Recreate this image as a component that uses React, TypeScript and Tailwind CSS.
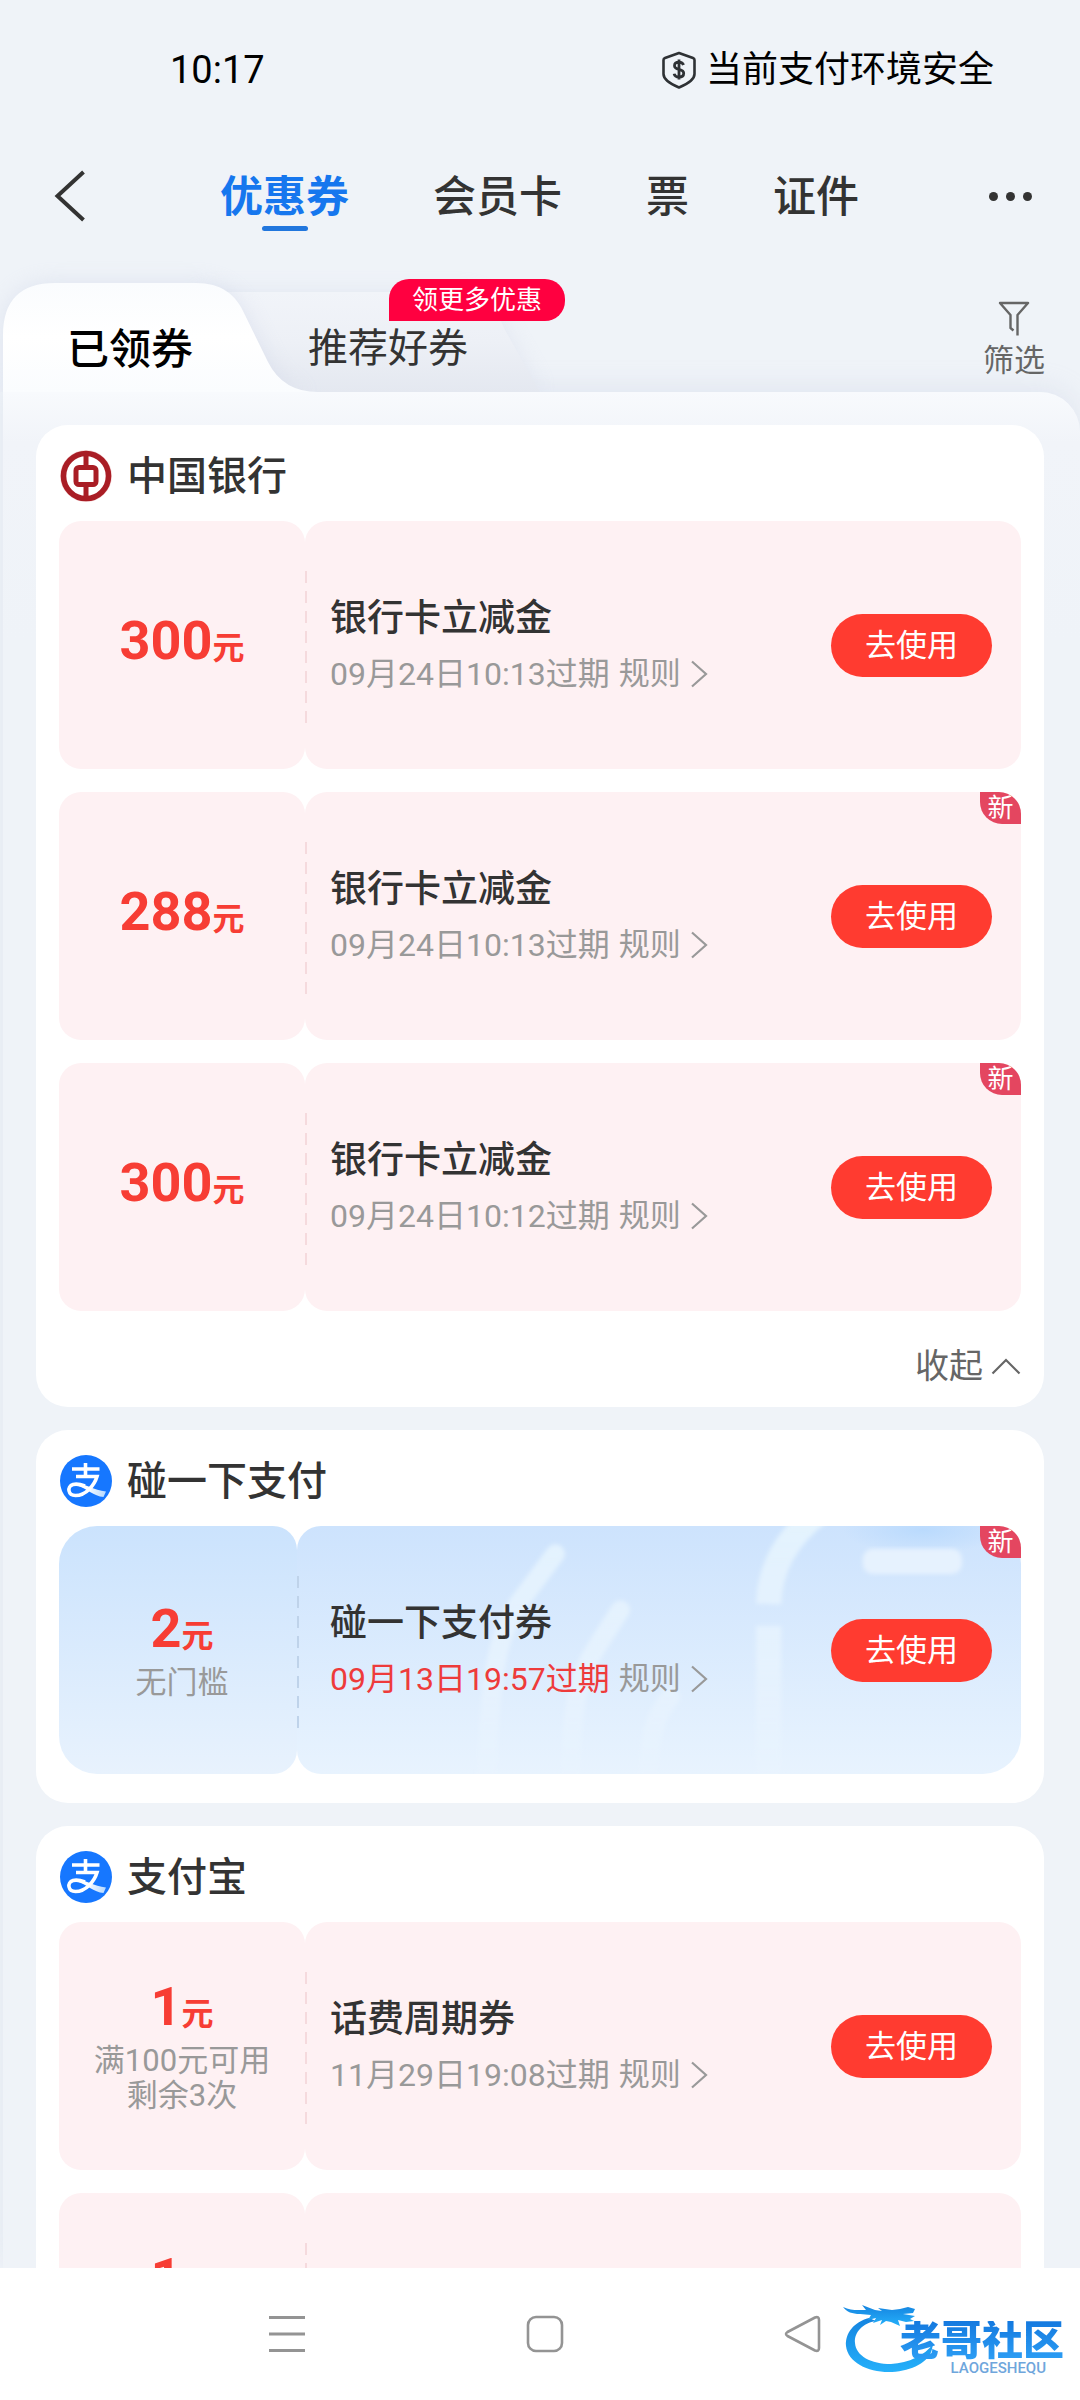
import { useState } from "react";
import type { ReactNode } from "react";
import clsx from "clsx";

interface Coupon {
  id: number;
  amount: string;
  notes?: string[];
  title: string;
  expiry: string;
  urgent?: boolean;
  isNew?: boolean;
}

interface CouponGroup {
  name: string;
  logo: ReactNode;
  theme: "pink" | "blue";
  collapsible?: boolean;
  coupons: Coupon[];
}

function BankLogo() {
  return (
    <svg viewBox="0 0 52 52" className="size-[52px] shrink-0" fill="none" stroke="#a91d25" aria-hidden="true">
      <circle cx="26" cy="26" r="25.5" stroke="#f7d9da" strokeWidth="1" />
      <circle cx="26" cy="26" r="22.5" strokeWidth="5.600" />
      <rect x="16" y="17.5" width="20" height="17" rx="3" strokeWidth="5" />
      <path d="M26 4v13M26 35v13" strokeWidth="5" />
    </svg>
  );
}

function AlipayLogo() {
  return (
    <svg viewBox="0 0 52 52" className="size-[52px] shrink-0" fill="none" aria-hidden="true">
      <defs>
        <linearGradient id="swoosh" x1="26" y1="34" x2="46" y2="40" gradientUnits="userSpaceOnUse">
          <stop offset="0" stopColor="#fff" />
          <stop offset="1" stopColor="#b4d8ff" />
        </linearGradient>
      </defs>
      <circle cx="26" cy="26" r="26" fill="#1677ff" />
      <path d="M17 28C25 29 34 35 46 36.500L43.500 42C34 41.500 26 33 17 30.500Z" fill="url(#swoosh)" />
      <path
        d="M12 14H39.500M25.500 8V21.500M16 21.500H37C34.500 30 26 40.500 15.500 40.500C8 40.500 6.500 31.500 13 29.500C17 28.500 21 29.500 25 31"
        stroke="#fff"
        strokeWidth="3.600"
      />
    </svg>
  );
}

const groups: CouponGroup[] = [
  {
    name: "中国银行",
    logo: <BankLogo />,
    theme: "pink",
    collapsible: true,
    coupons: [
      { id: 1, amount: "300", title: "银行卡立减金", expiry: "09月24日10:13过期" },
      { id: 2, amount: "288", title: "银行卡立减金", expiry: "09月24日10:13过期", isNew: true },
      { id: 3, amount: "300", title: "银行卡立减金", expiry: "09月24日10:12过期", isNew: true },
    ],
  },
  {
    name: "碰一下支付",
    logo: <AlipayLogo />,
    theme: "blue",
    coupons: [
      { id: 4, amount: "2", notes: ["无门槛"], title: "碰一下支付券", expiry: "09月13日19:57过期", urgent: true, isNew: true },
    ],
  },
  {
    name: "支付宝",
    logo: <AlipayLogo />,
    theme: "pink",
    coupons: [
      { id: 5, amount: "1", notes: ["满100元可用", "剩余3次"], title: "话费周期券", expiry: "11月29日19:08过期" },
      { id: 6, amount: "1", notes: ["满100元可用", "剩余3次"], title: "话费周期券", expiry: "11月29日19:08过期" },
    ],
  },
];

const mainTabs = ["优惠券", "会员卡", "票", "证件"];

function StatusBar() {
  return (
    <div className="flex h-[138px] shrink-0 items-center justify-between pt-[2px] pr-[86px] pl-[170px] text-[36px] text-black">
      <span className="text-[38px]">10:17</span>
      <div className="flex items-center gap-[10px]">
        <svg viewBox="0 0 34 38" className="h-[38px] w-[34px]" fill="none" stroke="#2e3135" strokeWidth="2.600" strokeLinejoin="round" aria-hidden="true">
          <path d="M17 2L31 7c1 .4 1.500 1 1.500 2v14c0 6-7 10-15.500 13.500C8.500 33 1.500 29 1.500 23V9c0-1 .5-1.600 1.500-2z" />
          <path d="M21.500 14c-.6-2-2.200-2.900-4.500-2.900-2.600 0-4.500 1.300-4.500 3.600 0 5 9.200 2.500 9.200 7.600 0 2.400-2 3.800-4.700 3.800-2.600 0-4.400-1.200-4.900-3.400M17 8.500v20" strokeWidth="2.800" />
        </svg>
        <span>当前支付环境安全</span>
      </div>
    </div>
  );
}

function TopNav() {
  const [active, setActive] = useState("优惠券");

  return (
    <nav className="flex h-[116px] shrink-0 items-center justify-between pr-[48px] pl-[54px]">
      <button type="button" aria-label="返回">
        <svg viewBox="0 0 32 52" className="h-[52px] w-[32px]" fill="none" stroke="#333" strokeWidth="4" aria-hidden="true">
          <path d="M29.500 2L3.500 26L29.500 50" />
        </svg>
      </button>
      <div className="flex gap-[84px] pt-[2px] pl-[4px] text-[43px] font-medium">
        {mainTabs.map((tab) => (
          <button
            key={tab}
            type="button"
            onClick={() => setActive(tab)}
            className={clsx("relative leading-[60px]", tab === active ? "font-bold text-[#1677ee]" : "text-[#333]")}
          >
            {tab}
            {tab === active && (
              <span className="absolute -bottom-[4px] left-1/2 h-[5px] w-[46px] -translate-x-1/2 rounded-full bg-[#2176dd]" />
            )}
          </button>
        ))}
      </div>
      <button type="button" aria-label="更多" className="flex gap-[8px]">
        <span className="size-[9px] rounded-full bg-[#333]" />
        <span className="size-[9px] rounded-full bg-[#333]" />
        <span className="size-[9px] rounded-full bg-[#333]" />
      </button>
    </nav>
  );
}

function SubTabs() {
  return (
    <div className="relative flex h-[138px] shrink-0 items-end justify-between pr-[35px] pl-[67px]">
      {/* folder shaped tab backgrounds */}
      <svg viewBox="0 0 620 138" className="absolute bottom-0 left-0 h-[138px] w-[620px]" aria-hidden="true">
        <defs>
          <linearGradient id="tabFront" x1="0" y1="0" x2="0" y2="1">
            <stop offset="0" stopColor="#fafcfe" />
            <stop offset="0.5" stopColor="#ffffff" />
            <stop offset="1" stopColor="#fafcfe" />
          </linearGradient>
          <linearGradient id="tabBack" x1="0" y1="0" x2="0" y2="1">
            <stop offset="0" stopColor="#f1f4f9" />
            <stop offset="0.5" stopColor="#edf0f6" />
            <stop offset="1" stopColor="#e4e8f0" />
          </linearGradient>
          <filter id="tabShadow" x="-20%" y="-40%" width="140%" height="180%">
            <feGaussianBlur stdDeviation="11" />
          </filter>
        </defs>
        <path d="M200 38H465C487 38 495 52 505 76L540 138H200Z" fill="#c9cfe3" opacity="0.35" filter="url(#tabShadow)" />
        <path d="M200 38H465C487 38 495 52 505 76L540 138H200Z" fill="url(#tabBack)" />
        <path d="M3 138V81Q3 29 55 29H196C221 29 236 40 245 61L268 108Q283 138 318 138Z" fill="#c5cce2" opacity="0.4" filter="url(#tabShadow)" />
        <path d="M3 138V81Q3 29 55 29H196C221 29 236 40 245 61L268 108Q283 138 318 138Z" fill="url(#tabFront)" />
      </svg>
      <div className="relative flex gap-[115px]">
        <button type="button" className="h-[86px] text-[42px] font-medium text-black">
          已领券
        </button>
        <button type="button" className="relative h-[86px] text-[40px] text-[#333]">
          推荐好券
          <span className="absolute -top-[27px] left-[81px] rounded-[20px] rounded-bl-none bg-[#ff0040] px-[23px] text-[26px] leading-[42px] whitespace-nowrap text-white">
            领更多优惠
          </span>
        </button>
      </div>
      <button type="button" className="relative mb-[15px] flex flex-col items-center gap-[9px] text-[31px] leading-[32px] text-[#666]">
        <svg viewBox="0 0 32 35" className="h-[35px] w-[32px]" fill="none" stroke="#666" strokeWidth="2.400" strokeLinejoin="round" aria-hidden="true">
          <path d="M19.500 34.500V14L30 2H2L12.500 14V27L15.500 29.500" />
        </svg>
        筛选
      </button>
    </div>
  );
}

function BlueArt() {
  return (
    <svg
      viewBox="0 0 723 248"
      preserveAspectRatio="xMaxYMid slice"
      className="absolute inset-0 h-full w-full"
      fill="none"
      strokeLinecap="round"
      aria-hidden="true"
    >
      <defs>
        <linearGradient id="fade" x1="0" y1="0" x2="0" y2="248" gradientUnits="userSpaceOnUse">
          <stop offset="0" stopColor="#e8f6fe" stopOpacity="0.85" />
          <stop offset="0.55" stopColor="#ecf6fe" stopOpacity="0.6" />
          <stop offset="1" stopColor="#f0f8fe" stopOpacity="0.1" />
        </linearGradient>
        <radialGradient id="spot">
          <stop offset="0" stopColor="#b5d8fd" stopOpacity="0.8" />
          <stop offset="1" stopColor="#b5d8fd" stopOpacity="0" />
        </radialGradient>
        <filter id="soft" x="-10%" y="-10%" width="120%" height="120%">
          <feGaussianBlur stdDeviation="2" />
        </filter>
      </defs>
      <ellipse cx="625" cy="4" rx="80" ry="24" fill="url(#spot)" />
      <g stroke="url(#fade)" filter="url(#soft)">
        <path d="M258 28L229 67C205 96 192 132 190 250" strokeWidth="19" />
        <path d="M323 84L300 120C281 148 274 180 273 250" strokeWidth="19" />
        <path d="M373 171C356 191 352 212 351 250" strokeWidth="19" />
        <path d="M522 -14C488 12 472 42 471 78" strokeWidth="25" strokeLinecap="butt" />
        <path d="M471 100V250" strokeWidth="25" strokeLinecap="butt" />
      </g>
      <rect x="565" y="23" width="99" height="25" rx="10" fill="#e6f2fe" filter="url(#soft)" />
    </svg>
  );
}

function CouponRow({ coupon, theme }: { coupon: Coupon; theme: "pink" | "blue" }) {
  const blue = theme === "blue";

  return (
    <li className="relative flex h-[248px]">
      <div
        className={clsx(
          "flex shrink-0 flex-col items-center justify-center",
          blue
            ? "w-[238px] rounded-[24px] rounded-l-[38px] bg-linear-to-b from-[#cbe3fd] to-[#e8f2fd] pl-[8px]"
            : "w-[246px] rounded-[22px] bg-[#fef1f3]"
        )}
      >
        <p className="flex h-[64px] items-baseline leading-[56px] font-bold text-[#f73d34]">
          <span className="text-[54px]">{coupon.amount}</span>
          <span className="text-[32px]">元</span>
        </p>
        {coupon.notes?.map((note) => (
          <p key={note} className="text-[31px] leading-[35px] text-[#999]">
            {note}
          </p>
        ))}
      </div>

      <div
        className={clsx(
          "relative flex flex-1 items-center justify-between overflow-hidden pr-[29px]",
          blue
            ? "rounded-[24px] rounded-r-[38px] bg-linear-to-b from-[#cde3fd] to-[#e8f3fe] pl-[33px]"
            : "rounded-[22px] bg-[#fef1f3] pl-[25px]"
        )}
      >
        {blue && <BlueArt />}
        <span
          className={clsx(
            "absolute top-[50px] left-0 h-[154px] w-[2px]",
            blue
              ? "bg-[repeating-linear-gradient(to_bottom,#bfd3ea_0px,#bfd3ea_12px,transparent_12px,transparent_20px)]"
              : "bg-[repeating-linear-gradient(to_bottom,#f5dadd_0px,#f5dadd_12px,transparent_12px,transparent_20px)]"
          )}
        />
        <div className="relative pt-[4px]">
          <h3 className="text-[37px] leading-[54px] font-medium text-[#333]">{coupon.title}</h3>
          <div className="flex items-center text-[31px] leading-[56px] text-[#999]">
            <span className={clsx("text-[32px]", coupon.urgent && "text-[#ee3b3b]")}>{coupon.expiry}</span>
            <a href="#rules" className="ml-[9px] flex items-center gap-[9px]">
              规则
              <svg viewBox="0 0 18 28" className="h-[28px] w-[18px]" fill="none" stroke="#999" strokeWidth="2.200" aria-hidden="true">
                <path d="M2 1.500L16 14L2 26.500" />
              </svg>
            </a>
          </div>
        </div>
        <button
          type="button"
          className="relative h-[63px] shrink-0 rounded-full bg-[#ff3b30] px-[34px] pt-[2px] text-[31px] whitespace-nowrap text-white"
        >
          去使用
        </button>
      </div>

      {coupon.isNew && (
        <span className="absolute top-0 right-0 h-[32px] w-[41px] rounded-tr-[22px] rounded-bl-[22px] bg-[#e44660] text-center text-[26px] leading-[32px] text-white">
          新
        </span>
      )}
    </li>
  );
}

function GroupCard({ group }: { group: CouponGroup }) {
  const [open, setOpen] = useState(true);
  const visible = open ? group.coupons : group.coupons.slice(0, 1);

  return (
    <section className={clsx("rounded-[32px] bg-white px-[23px]", !group.collapsible && "pb-[29px]")}>
      <header className="flex h-[96px] items-center gap-[15px] pt-[6px] pl-[1px]">
        {group.logo}
        <h2 className="pt-[2px] text-[40px] font-medium text-[#333]">{group.name}</h2>
      </header>
      <ul className="flex flex-col gap-[23px]">
        {visible.map((coupon) => (
          <CouponRow key={coupon.id} coupon={coupon} theme={group.theme} />
        ))}
      </ul>
      {group.collapsible && (
        <div className="flex h-[96px] items-center justify-end pt-[14px]">
          <button type="button" onClick={() => setOpen(!open)} className="flex items-center gap-[8px] text-[34px] text-[#666]">
            {open ? "收起" : "展开"}
            <svg
              viewBox="0 0 30 18"
              className={clsx("h-[18px] w-[30px]", !open && "rotate-180")}
              fill="none"
              stroke="#666"
              strokeWidth="2.200"
              aria-hidden="true"
            >
              <path d="M1.500 16.500L15 3L28.500 16.500" />
            </svg>
          </button>
        </div>
      )}
    </section>
  );
}

function CommunityLogo() {
  return (
    <div className="absolute top-[36px] right-[16px] flex h-[74px] w-[222px] justify-end">
      <svg viewBox="0 0 222 74" className="absolute inset-0 h-full w-full" aria-hidden="true">
        <defs>
          <linearGradient id="dragon" x1="0" y1="0" x2="0" y2="1">
            <stop offset="0" stopColor="#1584e0" />
            <stop offset="1" stopColor="#25b0fa" />
          </linearGradient>
        </defs>
        <g fill="url(#dragon)">
          <path d="M27 14C12 18 3 29 4 42C6 59 27 69 50 68C70 67 87 58 90 45L91 40C83 51 67 59 49 60C29 60 14 52 13 39C12 28 21 19 34 17Z" />
          <path d="M1 3C9 7 16 6 24 6L20 1L33 6L40 7L36 4L50 6L58 5L66 3L73 5L71 9L61 10L73 12L68 15L72 17L64 18L56 16L58 22L49 18L44 17L38 21L40 16L31 19L34 14L26 16L29 11L18 10C10 10 5 8 1 3Z" />
        </g>
      </svg>
      <div className="relative flex flex-col items-end pt-[17px]">
        <span className="bg-linear-to-b from-[#1479df] to-[#2d9ff5] bg-clip-text text-[41px] leading-[40px] font-black text-transparent">
          老哥社区
        </span>
        <span className="mr-[18px] text-[15px] leading-[14px] font-medium text-[#6fa6dc]">LAOGESHEQU</span>
      </div>
    </div>
  );
}

function SystemNav() {
  return (
    <footer className="relative flex h-[132px] shrink-0 items-center justify-between bg-white pr-[23.800%] pl-[24.700%]">
      <button type="button" aria-label="最近任务">
        <svg viewBox="0 0 40 40" className="size-[40px]" stroke="#949494" strokeWidth="3" aria-hidden="true">
          <path d="M2 3.500H38M2 20H38M2 36.500H38" />
        </svg>
      </button>
      <button type="button" aria-label="主屏幕">
        <svg viewBox="0 0 40 40" className="size-[40px]" fill="none" stroke="#949494" strokeWidth="2.600" aria-hidden="true">
          <rect x="3" y="3" width="34" height="34" rx="8" />
        </svg>
      </button>
      <button type="button" aria-label="后退">
        <svg viewBox="0 0 40 40" className="size-[40px]" fill="none" stroke="#949494" strokeWidth="2.600" strokeLinejoin="round" aria-hidden="true">
          <path d="M36 6V34Q36 38 32 36.500L4.500 22Q1.500 20 4.500 18L32 3.500Q36 2 36 6Z" />
        </svg>
      </button>
      <CommunityLogo />
    </footer>
  );
}

export default function App() {
  return (
    <div className="flex h-screen flex-col overflow-hidden bg-[#eff3f8] font-[Roboto,'Noto_Sans_CJK_SC',sans-serif]">
      <StatusBar />
      <TopNav />
      <SubTabs />
      <main className="ml-[3px] min-h-0 flex-1 rounded-tr-[40px] bg-[linear-gradient(to_bottom,#f8fafd_0px,#f1f4f9_50px,#eff3f8_250px)] shadow-[0_-6px_24px_rgba(190,200,225,0.25)]">
        <div className="flex h-full flex-col gap-[23px] overflow-y-auto pt-[33px] pr-[36px] pl-[33px] [scrollbar-width:none]">
          {groups.map((group) => (
            <GroupCard key={group.name} group={group} />
          ))}
        </div>
      </main>
      <SystemNav />
    </div>
  );
}
